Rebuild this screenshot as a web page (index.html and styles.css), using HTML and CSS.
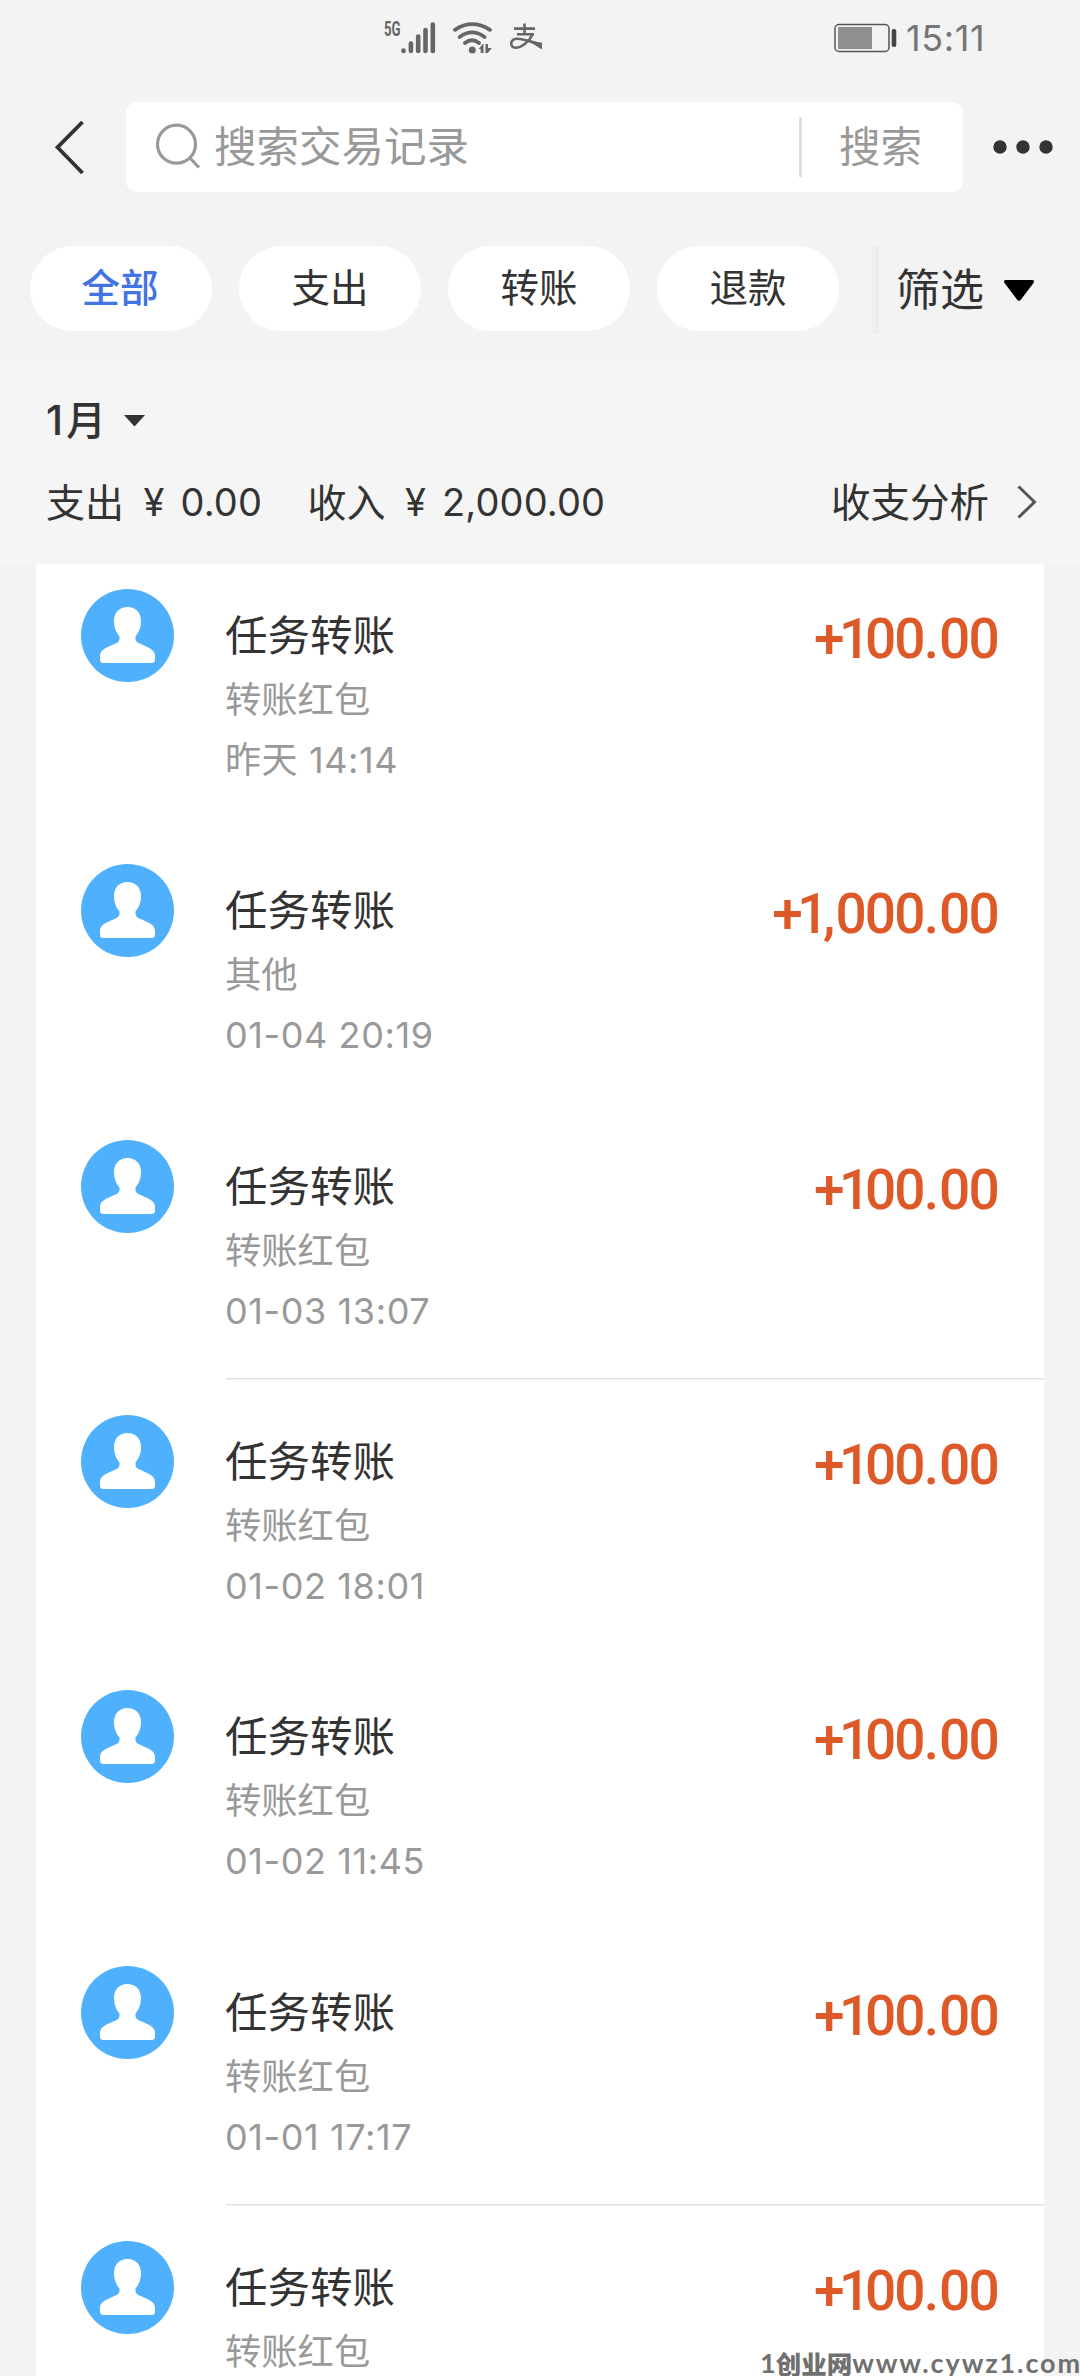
FILE: index.html
```html
<!DOCTYPE html>
<html lang="zh-CN">
<head>
<meta charset="utf-8">
<title>账单</title>
<link rel="stylesheet" href="styles.css">
</head>
<body>
<svg class="defs" width="0" height="0">
  <symbol id="person" viewBox="0 0 93 93">
    <circle cx="46.500" cy="46.500" r="46.500" fill="#4fb0fe"/>
    <path fill="#fff" d="M46.500 18C54.500 18 60 23.500 60 32C60 39 57.500 44 54.500 47.500V49.500C54.500 52 56 53.500 58.500 54.500C66 57.800 74 60.500 74 66.500V70.500Q74 74 70.500 74H22.500Q19 74 19 70.500V66.500C19 60.500 27 57.800 34.500 54.500C37 53.500 38.500 52 38.500 49.500V47.500C35.500 44 33 39 33 32C33 23.500 38.500 18 46.500 18Z"/>
  </symbol>
</svg>
<div class="screen">
  <header class="status">
    <span class="net">5G</span>
    <svg class="signal" width="36" height="36" viewBox="400 20 36 36" stroke="#666" stroke-width="4.600" stroke-linecap="round"><path d="M403.500 50.500v.5M410.900 43.500v7.500M418.200 36.500v14.500M425.500 30v21M432.800 24.500v26.500"/></svg>
    <svg class="wifi" width="42" height="36" viewBox="452 20 42 36" fill="none" stroke="#666" stroke-width="3.800" stroke-linecap="round"><path d="M455 29.800Q472 18.500 490 29.800M459.700 37Q472 27.800 484.500 37M465 43Q472 37.500 479 43"/><circle cx="472.300" cy="50" r="3.500" fill="#666" stroke="none"/><path fill="#666" stroke="none" d="M483.500 44v9h-2.800v-4h-2l4-5zM485.500 44h2.500v4h3.800l-4 5h-2.300z"/></svg>
    <svg class="pay" width="34" height="32" viewBox="509 22 34 32" fill="none" stroke="#666" stroke-width="2.600"><path d="M514 28.600h21M517 34.300h17M524.500 23.500v11M532.500 34.500C529 42 521 47.800 515.500 47.800C509.500 47.500 509.500 39.500 517 38.800C523 38.500 530 42.500 542 44"/><path fill="#666" stroke="none" d="M524 38.500L542 43.500V49.500Z"/></svg>
    <svg class="battery" width="66" height="32" viewBox="833 22 66 32"><rect x="835" y="24.500" width="54" height="27" rx="4" fill="none" stroke="#555" stroke-width="1.500"/><path fill="#8f8f8f" d="M838 27h34v22h-34z"/><rect x="891.700" y="29" width="4.600" height="18" rx="2" fill="#444"/></svg>
    <span class="clock">15:11</span>
  </header>
  <nav class="topbar">
    <svg class="back" width="32" height="56" viewBox="54 119 32 56" fill="none" stroke="#333" stroke-width="3.800"><path d="M82.500 122L57.500 147.300L82.500 173"/></svg>
    <div class="search">
      <svg width="46" height="48" viewBox="155 124 46 48" fill="none" stroke="#999" stroke-width="3.200"><circle cx="176.500" cy="145.200" r="19"/><path d="M189.500 158.500L199 168.500"/></svg>
      <span class="placeholder">搜索交易记录</span>
      <span class="go">搜索</span>
    </div>
    <svg class="more" width="62" height="16" viewBox="993 140 62 16" fill="#333"><circle cx="1000" cy="148" r="6.700"/><circle cx="1023" cy="148" r="6.700"/><circle cx="1046" cy="148" r="6.700"/></svg>
  </nav>
  <div class="filters">
    <span class="chip active">全部</span><span class="chip">支出</span><span class="chip">转账</span><span class="chip">退款</span>
    <div class="filter"><span class="filter-text">筛选</span><svg width="32" height="24" viewBox="0 0 32 24"><path d="M3 2h26q3 0 1.500 3L18 21.500q-2 2.500-4 0L1.500 5Q0 2 3 2z"/></svg></div>
  </div>
  <section class="summary">
    <div class="month"><span class="num">1</span><span class="unit">月</span><svg width="21" height="12" viewBox="0 0 21 12"><path fill="#333" d="M0 0h21L10.500 11.500z"/></svg></div>
    <div class="totals">
      <span class="label">支出</span><span class="yen">¥</span><span class="sum first">0.00</span>
      <span class="label">收入</span><span class="yen">¥</span><span class="sum">2,000.00</span>
      <span class="analysis">收支分析</span>
      <svg width="20" height="34" viewBox="0 0 20 34" fill="none" stroke="#555" stroke-width="3"><path d="M1.500 1.500L17.500 17L1.500 32.500"/></svg>
    </div>
  </section>
  <main class="list">
    <article class="row"><svg class="avatar"><use href="#person"/></svg><div class="info"><h3>任务转账</h3><p>转账红包</p><time>昨天 14:14</time></div><b class="amount"><span class="lead">+1</span>00<span class="dot">.</span>00</b></article>
    <article class="row"><svg class="avatar"><use href="#person"/></svg><div class="info"><h3>任务转账</h3><p>其他</p><time>01-04 20:19</time></div><b class="amount"><span class="lead">+1</span><span class="dot">,</span>000<span class="dot">.</span>00</b></article>
    <article class="row"><svg class="avatar"><use href="#person"/></svg><div class="info"><h3>任务转账</h3><p>转账红包</p><time>01-03 13:07</time></div><b class="amount"><span class="lead">+1</span>00<span class="dot">.</span>00</b></article>
    <article class="row ruled"><svg class="avatar"><use href="#person"/></svg><div class="info"><h3>任务转账</h3><p>转账红包</p><time>01-02 18:01</time></div><b class="amount"><span class="lead">+1</span>00<span class="dot">.</span>00</b></article>
    <article class="row"><svg class="avatar"><use href="#person"/></svg><div class="info"><h3>任务转账</h3><p>转账红包</p><time>01-02 11:45</time></div><b class="amount"><span class="lead">+1</span>00<span class="dot">.</span>00</b></article>
    <article class="row"><svg class="avatar"><use href="#person"/></svg><div class="info"><h3>任务转账</h3><p>转账红包</p><time>01-01 17:17</time></div><b class="amount"><span class="lead">+1</span>00<span class="dot">.</span>00</b></article>
    <article class="row ruled"><svg class="avatar"><use href="#person"/></svg><div class="info"><h3>任务转账</h3><p>转账红包</p></div><b class="amount"><span class="lead">+1</span>00<span class="dot">.</span>00</b></article>
  </main>
  <div class="watermark">1<span class="name">创业网</span><span class="site">www.cywz1.com</span></div>
</div>
</body>
</html>
```
FILE: styles.css
```css
* { box-sizing: border-box; margin: 0; padding: 0; }
body { background: #f3f3f3; font-family: Inter, "Noto Sans CJK SC", sans-serif; color: #333; }
svg { display: block; flex: none; }
.defs { position: absolute; }
.screen { position: relative; width: 1080px; height: 2376px; overflow: hidden; display: flex; flex-direction: column; white-space: nowrap; }

.status { height: 76px; display: flex; align-items: flex-start; padding: 20px 0 0 384px; }
.net { width: 16px; font: 700 20px/19px Roboto, sans-serif; color: #666; transform: scaleX(.66); transform-origin: 0 0; }
.wifi { margin-left: 16px; }
.pay { margin: 2px 0 0 15px; }
.battery { margin: 2px 0 0 290px; }
.clock { margin-left: 7px; font-size: 36px; line-height: 37px; color: #757575; letter-spacing: .6px; }

.topbar { height: 142px; display: flex; align-items: center; padding: 0 0 0 54px; }
.search { width: 837px; height: 90px; margin: 0 30px 0 40px; padding-left: 29px; display: flex; align-items: center; background: #fff; border-radius: 11px; color: #999; font-size: 42.500px; }
.placeholder { margin-left: 13px; flex: 1; padding-bottom: 8px; }
.go { width: 164px; height: 60px; line-height: 60px; padding-left: 37px; border-left: 3px solid #e0e0e0; font-size: 41.500px; }

.filters { height: 141px; padding: 28px 0 0 30px; display: flex; }
.chip { width: 182px; height: 85px; margin-right: 27px; border-radius: 43px; background: #fff; text-align: center; font-size: 38.500px; line-height: 85px; }
.active { color: #4273e3; font-weight: 500; padding-right: 2px; }
.filter { margin-left: 4px; width: 210px; height: 88px; padding-left: 26px; display: flex; align-items: center; gap: 19px; font-size: 44px; background: linear-gradient(90deg, #f3f3f3, #eaeaea) 0 0 / 9px 100% no-repeat; }
.filter-text { padding-bottom: 6px; }

.summary { height: 205px; padding: 38px 43px 0 46px; background: #f5f5f5; }
.month { display: flex; align-items: center; height: 46px; font-size: 40px; font-weight: 500; }
.num { font-size: 41px; margin-right: 3px; line-height: 44px; padding-bottom: 1px; }
.unit { padding-bottom: 4px; }
.month svg { margin: 2px 0 0 18px; }
.totals { display: flex; align-items: center; height: 60px; margin-top: 29px; font-size: 38px; letter-spacing: .15px; }
.label { font-size: 39px; width: 97.500px; padding-bottom: 5px; letter-spacing: 0; }
.yen { width: 37px; font-size: 38px; }
.first { width: 127px; }
.analysis { margin-left: auto; margin-right: 28px; padding-bottom: 5px; font-size: 39.500px; letter-spacing: 0; }

.list { width: 1008px; margin-left: 36px; height: 1812px; background: #fff; padding-left: 45px; overflow: hidden; }
.row { height: 275.333px; padding-top: 37px; display: flex; }
.row:first-child { margin-top: -12px; }
.ruled { background: linear-gradient(#e0e0e0, #e0e0e0) 145px 0 / 100% 1.500px no-repeat; }
.avatar { width: 93px; height: 93px; }
.info { margin-left: 51px; flex: 1; display: flex; flex-direction: column; color: #999; }
h3 { font-size: 42.500px; font-weight: 400; line-height: 60px; color: #333; margin-top: 17px; }
.info p { font-size: 36.300px; line-height: 60px; margin-top: 4px; }
.info time { font-size: 36px; line-height: 60px; margin-top: 0; letter-spacing: .6px; }
.amount { margin: 18px 46px 0 0; font: 500 55px/64px Roboto, sans-serif; letter-spacing: -1.800px; color: #dd5a28; }
.lead { letter-spacing: -5.500px; }
.dot { letter-spacing: 0; }

.watermark { position: absolute; left: 760px; top: 2345px; font: 700 27px/36px Lato, "Noto Sans CJK SC", sans-serif; color: #707070; display: flex; }
.name { font: 900 25.500px/36px "Noto Sans CJK SC", sans-serif; }
.site { letter-spacing: 1.900px; }
```
